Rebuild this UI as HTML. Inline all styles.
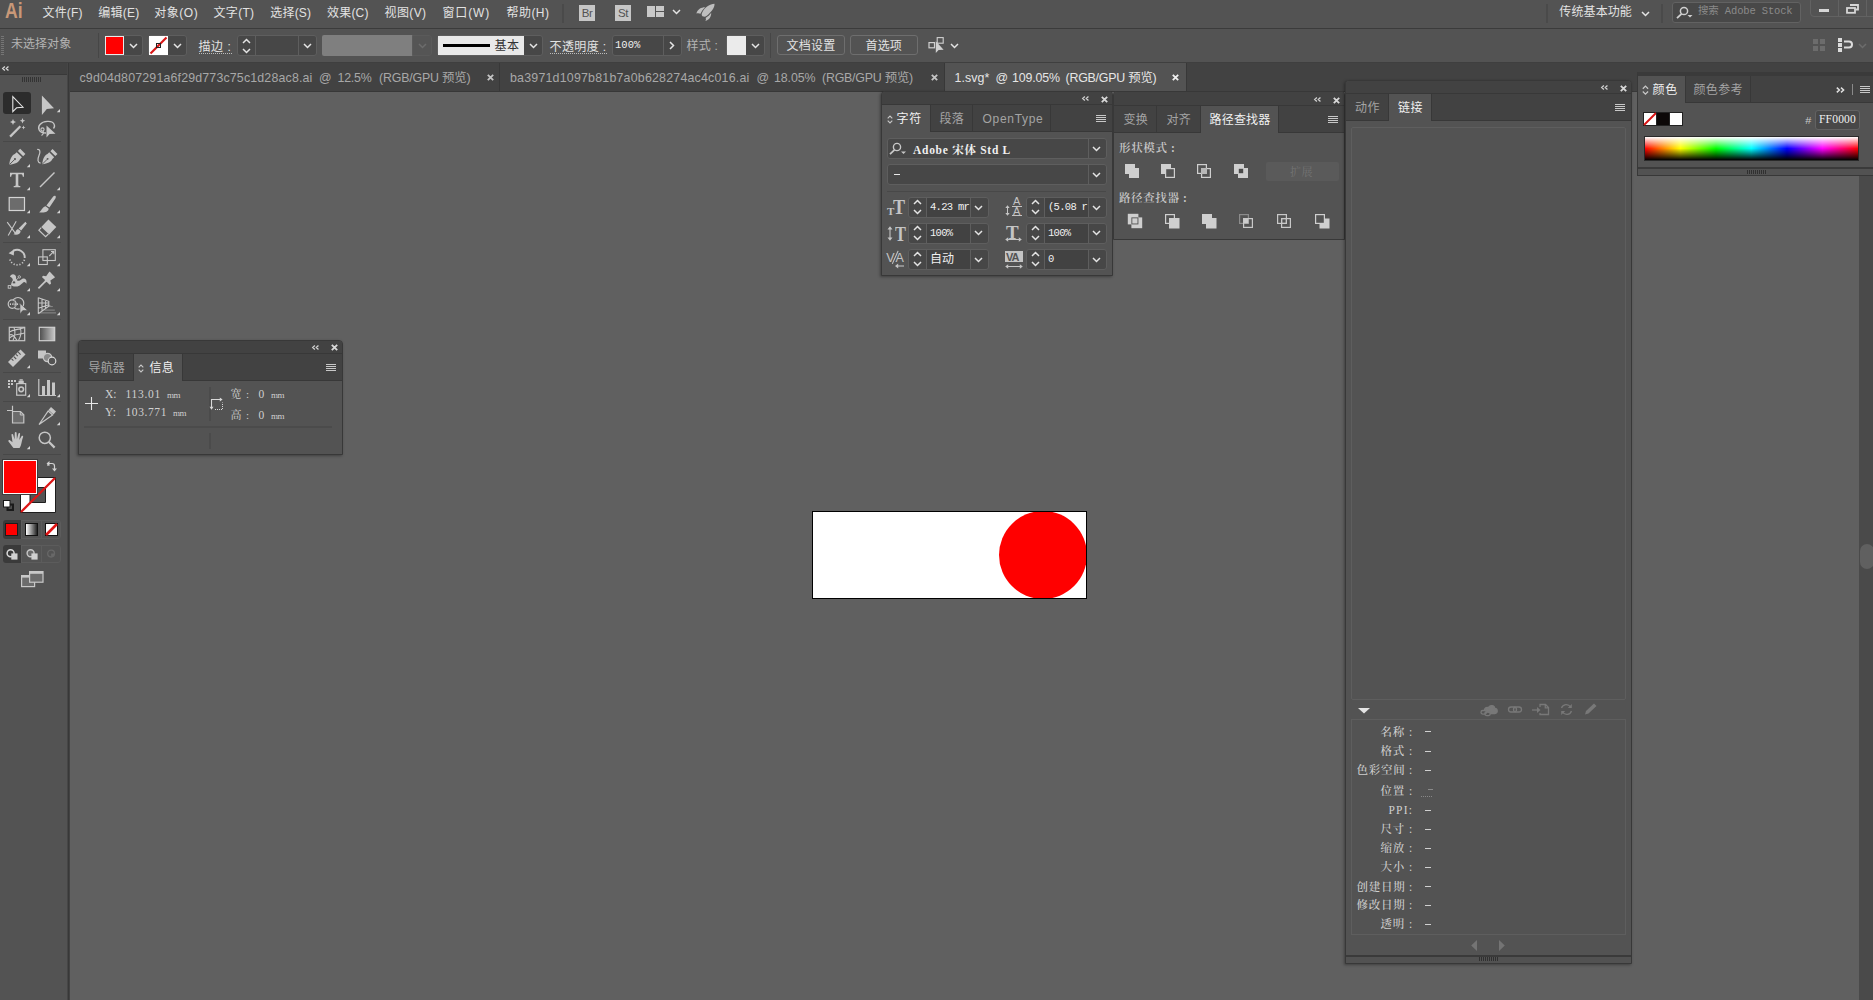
<!DOCTYPE html>
<html lang="zh-CN">
<head>
<meta charset="utf-8">
<title>Adobe Illustrator</title>
<style>
*{box-sizing:border-box;margin:0;padding:0}
html,body{width:1873px;height:1000px;overflow:hidden;background:#606060}
body{position:relative;font-family:"Liberation Sans","Noto Sans CJK SC",sans-serif;font-size:12px;color:#dcdcdc;line-height:1}
.a{position:absolute}
.t{position:absolute;white-space:pre;line-height:16px;height:16px}
svg{position:absolute;overflow:visible}
.serif{font-family:"Liberation Serif","Noto Serif CJK SC",serif}
.mono{font-family:"Liberation Mono","Noto Sans CJK SC",monospace}
.box{position:absolute;border:1px solid #5e5e5e;border-radius:3px;background:#474747}
.btn{position:absolute;border:1px solid #6e6e6e;border-radius:3px}
.dot{border-bottom:1px dotted #bbb}
.panel{position:absolute;background:#535353;border:1px solid #383838}
.v{position:absolute;width:1px;background:#5e5e5e}
</style>
</head>
<body>
<!-- canvas -->
<div class="a" style="left:70px;top:92px;width:1789px;height:908px;background:#606060;"></div>
<div class="a" style="left:812px;top:511px;width:275px;height:88px;background:#fff;border:1px solid #000;overflow:hidden"><div class="a" style="left:186px;top:-1px;width:88px;height:88px;border-radius:50%;background:#ff0000"></div></div>
<div class="a" style="left:1859px;top:176px;width:14px;height:824px;background:#4a4a4a;"></div>
<div class="a" style="left:1860px;top:544px;width:14px;height:25px;background:#606060;border-radius:7px"></div>
<!-- menubar -->
<div class="a" style="left:0;top:0;width:1873px;height:29px;background:#535353;border-bottom:1px solid #3b3b3b">
<div class="t" style="left:4.5px;top:0;font-size:22px;font-weight:bold;color:#c89878;line-height:22px;height:22px;transform:scaleX(.8);transform-origin:0 0">Ai</div>
<div class="t" style="left:42.5px;top:5.2px;color:#e2e2e2;letter-spacing:0.174px;">文件(F)</div>
<div class="t" style="left:98.25px;top:5.2px;color:#e2e2e2;letter-spacing:0.240px;">编辑(E)</div>
<div class="t" style="left:154.25px;top:5.2px;color:#e2e2e2;letter-spacing:0.524px;">对象(O)</div>
<div class="t" style="left:213.5px;top:5.2px;color:#e2e2e2;letter-spacing:0.324px;">文字(T)</div>
<div class="t" style="left:270.25px;top:5.2px;color:#e2e2e2;letter-spacing:0.190px;">选择(S)</div>
<div class="t" style="left:327.0px;top:5.2px;color:#e2e2e2;letter-spacing:0.206px;">效果(C)</div>
<div class="t" style="left:384.5px;top:5.2px;color:#e2e2e2;letter-spacing:0.390px;">视图(V)</div>
<div class="t" style="left:442.5px;top:5.2px;color:#e2e2e2;letter-spacing:0.874px;">窗口(W)</div>
<div class="t" style="left:506.5px;top:5.2px;color:#e2e2e2;letter-spacing:0.456px;">帮助(H)</div>
<div class="a" style="left:562px;top:4px;width:2px;height:19px;background:#4a4a4a;"></div>
<div class="a" style="left:579px;top:5px;width:16px;height:16px;background:#c6c6c6;color:#535353;font-size:11.5px;line-height:17px;text-align:center;letter-spacing:-.5px">Br</div>
<div class="a" style="left:615px;top:5px;width:16px;height:16px;background:#c6c6c6;color:#535353;font-size:11.5px;line-height:17px;text-align:center;letter-spacing:-.5px">St</div>
<svg style="left:647px;top:6px" width="18" height="12" viewBox="0 0 18 12"><rect x="0" y="0" width="8" height="11" fill="#c8c8c8"/><rect x="9" y="0" width="8" height="5" fill="#c8c8c8"/><rect x="9" y="6" width="8" height="5" fill="#c8c8c8"/></svg>
<svg style="left:672.0px;top:8.8px" width="9" height="6" viewBox="0 0 9 6"><path d="M1 1 L4.5 4.5 L8 1" fill="none" stroke="#e4e4e4" stroke-width="1.5"/></svg>
<svg style="left:694px;top:2px" width="22" height="20" viewBox="694 2 22 20"><path d="M714.5 3.8 C710 4 704.6 6.8 701.9 13.2 C701.3 14.8 702 16.2 703.4 16.6 C704.6 16.9 705.8 16.6 706.8 15.8 C712 11.5 714.8 7.6 714.5 3.8Z M696.4 13.6 C697.4 9.2 701.2 7.2 705.2 7.2 C703.2 8.9 701.5 11.2 700.5 13.8 C699.2 13 697.7 12.9 696.4 13.6Z M705.3 21 C709.3 19.8 711.3 16.8 711.2 12.8 C709.7 14.9 707.8 16.7 705.6 17.9 C706.2 18.9 706 20 705.3 21Z" fill="#bebebe"/></svg>
<div class="a" style="left:1546px;top:4px;width:2px;height:19px;background:#4a4a4a;"></div>
<div class="t" style="left:1559.3px;top:3.7px;color:#e2e2e2;letter-spacing:0.114px;">传统基本功能</div>
<svg style="left:1640.5px;top:10.5px" width="9" height="6" viewBox="0 0 9 6"><path d="M1 1 L4.5 4.5 L8 1" fill="none" stroke="#e4e4e4" stroke-width="1.5"/></svg>
<div class="a" style="left:1661px;top:4px;width:2px;height:19px;background:#4a4a4a;"></div>
<div class="box" style="left:1672px;top:2px;width:129px;height:21px;background:#484848;border-color:#626262"></div>
<svg style="left:1676px;top:6px" width="18" height="14" viewBox="0 0 18 14"><circle cx="8" cy="5" r="3.6" fill="none" stroke="#d0d0d0" stroke-width="1.5"/><path d="M5.5 7.8 L1 12.2" stroke="#d0d0d0" stroke-width="1.8"/><path d="M11.5 9 h5 l-2.5 2.6z" fill="#d0d0d0"/></svg>
<div class="t mono" style="left:1698px;top:3px;font-size:10.5px;color:#8a8a8a;letter-spacing:-0.152px;">搜索 Adobe Stock</div>
<div class="a" style="left:1810px;top:-3px;width:70px;height:20px;border:1px solid #626262;border-radius:4px"></div>
<div class="a" style="left:1838px;top:0px;width:1px;height:16px;background:#626262;"></div>
<div class="a" style="left:1866px;top:0px;width:1px;height:16px;background:#626262;"></div>
<div class="a" style="left:1819px;top:9px;width:10px;height:3px;background:#d6d6d6;"></div>
<svg style="left:1845.5px;top:3.5px" width="13" height="10" viewBox="0 0 13 10"><path d="M4 1 h8 v4.5 h-2.5" fill="none" stroke="#d6d6d6" stroke-width="1.8"/><rect x="1" y="4" width="8" height="4.8" fill="none" stroke="#d6d6d6" stroke-width="1.8"/></svg>
</div>
<!-- control bar -->
<div class="a" style="left:0;top:29px;width:1873px;height:34px;background:#535353;border-bottom:1px solid #3f3f3f">
<div class="a" style="left:1px;top:7px;width:3px;height:19px;background:repeating-linear-gradient(#757575 0 1px,transparent 1px 2px)"></div>
<div class="t" style="left:11px;top:7.2px;color:#b4b4b4;letter-spacing:0.037px;">未选择对象</div>
<div class="a" style="left:98px;top:4px;width:1px;height:25px;background:#464646;"></div>
<div class="box" style="left:105px;top:6px;width:38px;height:21px"></div>
<div class="a" style="left:105px;top:7px;width:19px;height:19px;background:#ff0000;border:1px solid #e8e8e8"></div>
<svg style="left:128.5px;top:14.0px" width="9" height="6" viewBox="0 0 9 6"><path d="M1 1 L4.5 4.5 L8 1" fill="none" stroke="#e4e4e4" stroke-width="1.5"/></svg>
<div class="box" style="left:148px;top:6px;width:39px;height:21px"></div>
<svg style="left:149px;top:7px" width="19" height="19" viewBox="0 0 19 19"><rect width="19" height="19" fill="#fff"/><path d="M1.5 17.5 L17.5 1.5" stroke="#d81616" stroke-width="2.1"/><rect x="7.5" y="7.5" width="4" height="4" fill="none" stroke="#222" stroke-width="1"/></svg>
<svg style="left:172.5px;top:14.0px" width="9" height="6" viewBox="0 0 9 6"><path d="M1 1 L4.5 4.5 L8 1" fill="none" stroke="#e4e4e4" stroke-width="1.5"/></svg>
<div class="t dot" style="left:198.5px;top:10px;color:#e2e2e2;letter-spacing:0.582px;height:14.5px;">描边 :</div>
<div class="box" style="left:237px;top:6px;width:80px;height:21px"></div>
<div class="v" style="left:255px;top:7px;height:19px"></div><div class="v" style="left:298px;top:7px;height:19px"></div>
<svg style="left:241.5px;top:9px" width="9" height="16" viewBox="0 0 9 16"><path d="M1 5 L4.5 1.5 L8 5 M1 11 L4.5 14.5 L8 11" fill="none" stroke="#e4e4e4" stroke-width="1.5"/></svg>
<svg style="left:302.5px;top:14.0px" width="9" height="6" viewBox="0 0 9 6"><path d="M1 1 L4.5 4.5 L8 1" fill="none" stroke="#e4e4e4" stroke-width="1.5"/></svg>
<div class="a" style="left:322px;top:6px;width:91px;height:21px;background:#7f7f7f;border-radius:2px 0 0 2px"></div>
<div class="box" style="left:412px;top:6px;width:20px;height:21px;background:#555;border-color:#5a5a5a;border-radius:0 3px 3px 0"></div>
<svg style="left:418.0px;top:14.0px" width="9" height="6" viewBox="0 0 9 6"><path d="M1 1 L4.5 4.5 L8 1" fill="none" stroke="#6c6c6c" stroke-width="1.5"/></svg>
<div class="box" style="left:437px;top:6px;width:106px;height:21px"></div>
<div class="a" style="left:438px;top:7px;width:86px;height:19px;background:#e9e9e9;"></div>
<div class="a" style="left:443px;top:15px;width:47px;height:3px;background:#000;"></div>
<div class="t" style="left:494.5px;top:9px;color:#333;letter-spacing:0.392px;">基本</div>
<svg style="left:528.5px;top:14.0px" width="9" height="6" viewBox="0 0 9 6"><path d="M1 1 L4.5 4.5 L8 1" fill="none" stroke="#e4e4e4" stroke-width="1.5"/></svg>
<div class="t dot" style="left:549.5px;top:10px;color:#e2e2e2;letter-spacing:0.388px;height:14.5px;">不透明度 :</div>
<div class="box" style="left:612px;top:6px;width:70px;height:21px"></div>
<div class="v" style="left:663px;top:7px;height:19px"></div>
<div class="t mono" style="left:615px;top:7.5px;font-size:10.5px;color:#f0f0f0;letter-spacing:0.070px;">100%</div>
<svg style="left:668.5px;top:12px" width="6" height="9" viewBox="0 0 6 9"><path d="M1 1 L4.5 4.5 L1 8" fill="none" stroke="#e4e4e4" stroke-width="1.5"/></svg>
<div class="t" style="left:686.5px;top:8.5px;color:#b4b4b4;letter-spacing:0.207px;">样式 :</div>
<div class="box" style="left:726px;top:6px;width:39px;height:21px"></div>
<div class="a" style="left:727px;top:7px;width:19px;height:19px;background:#ebebeb;"></div>
<svg style="left:750.5px;top:14.0px" width="9" height="6" viewBox="0 0 9 6"><path d="M1 1 L4.5 4.5 L8 1" fill="none" stroke="#e4e4e4" stroke-width="1.5"/></svg>
<div class="a" style="left:770px;top:4px;width:1px;height:25px;background:#464646;"></div>
<div class="btn" style="left:777px;top:6px;width:68px;height:20px"></div>
<div class="t" style="left:786.5px;top:9px;color:#e2e2e2;letter-spacing:0.246px;">文档设置</div>
<div class="btn" style="left:850px;top:6px;width:68px;height:20px"></div>
<div class="t" style="left:865.5px;top:9px;color:#e2e2e2;letter-spacing:0.161px;">首选项</div>
<svg style="left:926px;top:7px" width="20" height="18" viewBox="926 36 20 18"><rect x="929" y="42.6" width="5.5" height="5.2" fill="none" stroke="#d0d0d0" stroke-width="1.2"/><rect x="937.2" y="37.6" width="6" height="5.6" fill="none" stroke="#d0d0d0" stroke-width="1.1"/><path d="M935.8 41.2 V53 L938.6 50 L943.6 49.8Z" fill="#d0d0d0"/></svg>
<svg style="left:949.5px;top:14.0px" width="9" height="6" viewBox="0 0 9 6"><path d="M1 1 L4.5 4.5 L8 1" fill="none" stroke="#e4e4e4" stroke-width="1.5"/></svg>
<svg style="left:1812px;top:9px" width="15" height="14" viewBox="0 0 15 14"><g fill="#6c6c6c"><rect x="1" y="1" width="5" height="5"/><rect x="8" y="1" width="5" height="5"/><rect x="1" y="8" width="5" height="5"/><rect x="8" y="8" width="5" height="5"/></g></svg>
<svg style="left:1837.5px;top:8px" width="17" height="16" viewBox="0 0 17 16"><g fill="#dcdcdc"><rect x="0" y="1" width="4" height="4"/><rect x="0" y="6" width="4" height="4"/><rect x="0" y="11" width="4" height="4"/></g><path d="M6 4.5 h5 a3 3 0 0 1 0 6 h-5" fill="none" stroke="#dcdcdc" stroke-width="2"/></svg>
<svg style="left:1857.5px;top:14.0px" width="9" height="6" viewBox="0 0 9 6"><path d="M1 1 L4.5 4.5 L8 1" fill="none" stroke="#6c6c6c" stroke-width="1.5"/></svg>
</div>
<!-- document tabs -->
<div class="a" style="left:0;top:63px;width:1873px;height:29px;background:#424242;border-bottom:1px solid #383838">
<div class="a" style="left:945px;top:0px;width:241px;height:28px;background:#535353;"></div>
<div class="t" style="left:79.5px;top:6.7px;font-size:12.4px;color:#a8a8a8;letter-spacing:0.161px;">c9d04d807291a6f29d773c75c1d28ac8.ai</div>
<div class="t" style="left:319px;top:6.7px;font-size:12.4px;color:#a8a8a8;letter-spacing:-1.094px;">@</div>
<div class="t" style="left:337.5px;top:6.7px;font-size:12.4px;color:#a8a8a8;letter-spacing:-0.228px;">12.5%</div>
<div class="t" style="left:379px;top:6.7px;font-size:12.4px;color:#a8a8a8;letter-spacing:-0.177px;">(RGB/GPU 预览)</div>
<svg style="left:486.5px;top:10.5px" width="7" height="7" viewBox="0 0 7 7"><path d="M.8 .8 L6.2 6.2 M6.2 .8 L.8 6.2" stroke="#c4c4c4" stroke-width="1.8"/></svg>
<div class="a" style="left:499px;top:0px;width:1px;height:28px;background:#383838;"></div>
<div class="t" style="left:510px;top:6.7px;font-size:12.4px;color:#a8a8a8;letter-spacing:0.208px;">ba3971d1097b81b7a0b628274ac4c016.ai</div>
<div class="t" style="left:756.5px;top:6.7px;font-size:12.4px;color:#a8a8a8;letter-spacing:-1.094px;">@</div>
<div class="t" style="left:774px;top:6.7px;font-size:12.4px;color:#a8a8a8;letter-spacing:-0.089px;">18.05%</div>
<div class="t" style="left:822px;top:6.7px;font-size:12.4px;color:#a8a8a8;letter-spacing:-0.219px;">(RGB/GPU 预览)</div>
<svg style="left:930.5px;top:10.5px" width="7" height="7" viewBox="0 0 7 7"><path d="M.8 .8 L6.2 6.2 M6.2 .8 L.8 6.2" stroke="#c4c4c4" stroke-width="1.8"/></svg>
<div class="a" style="left:944px;top:0px;width:1px;height:28px;background:#383838;"></div>
<div class="t" style="left:954.5px;top:6.7px;font-size:12.4px;color:#e6e6e6;letter-spacing:0.094px;">1.svg*</div>
<div class="t" style="left:995.5px;top:6.7px;font-size:12.4px;color:#e6e6e6;letter-spacing:-1.594px;">@</div>
<div class="t" style="left:1012px;top:6.7px;font-size:12.4px;color:#e6e6e6;letter-spacing:-0.132px;">109.05%</div>
<div class="t" style="left:1065.5px;top:6.7px;font-size:12.4px;color:#e6e6e6;letter-spacing:-0.219px;">(RGB/GPU 预览)</div>
<svg style="left:1172.0px;top:10.5px" width="7" height="7" viewBox="0 0 7 7"><path d="M.8 .8 L6.2 6.2 M6.2 .8 L.8 6.2" stroke="#f0f0f0" stroke-width="1.8"/></svg>
<div class="a" style="left:1186px;top:0px;width:1px;height:28px;background:#383838;"></div>
</div>
<!-- toolbar -->
<div class="a" style="left:0;top:63px;width:70px;height:937px;background:linear-gradient(90deg,#535353 0 67px,#464646 67px 68px,#383838 68px 69px,#424242 69px 70px)">
<div class="a" style="left:0px;top:0px;width:67px;height:11px;background:#424242;"></div>
<div class="a" style="left:0px;top:11px;width:67px;height:1px;background:#393939;"></div>
<svg style="left:2.13px;top:3.45px" width="7.14" height="5.1" viewBox="0 0 8.4 6"><path d="M3.4 .6 L.8 3 L3.4 5.4 M7.6 .6 L5 3 L7.6 5.4" fill="none" stroke="#d8d8d8" stroke-width="1.5"/></svg>
<div class="a" style="left:22px;top:14px;width:19px;height:5px;background:repeating-linear-gradient(90deg,#333 0 1px,transparent 1px 2px)"></div>
<div class="a" style="left:3px;top:78.0px;width:58px;height:1px;background:#484848;"></div>
<div class="a" style="left:3px;top:179.0px;width:58px;height:1px;background:#484848;"></div>
<div class="a" style="left:3px;top:256.0px;width:58px;height:1px;background:#484848;"></div>
<div class="a" style="left:3px;top:309.0px;width:58px;height:1px;background:#484848;"></div>
<div class="a" style="left:3px;top:337.5px;width:58px;height:1px;background:#484848;"></div>
<div class="a" style="left:3px;top:391.0px;width:58px;height:1px;background:#484848;"></div>
<div class="a" style="left:3px;top:29px;width:28px;height:22px;background:#2c2c2c;border-radius:3px"></div>
<svg style="left:5px;top:27.5px" width="24" height="24" viewBox="0 0 24 24" fill="#c6c6c6" stroke="none"><path d="M7.8 5.6 V20.6 L11.6 16.8 L18 16.2Z" fill="none" stroke="#e4e4e4" stroke-width="1.1" stroke-linejoin="miter"/></svg>
<svg style="left:35px;top:27.5px" width="24" height="24" viewBox="0 0 24 24" fill="#c6c6c6" stroke="none"><path d="M6.9 4.5 V24 L11.8 18 L19 17.2Z"/><path d="M25 18 v3.2 h-3.2z" fill="#d4d4d4"/></svg>
<svg style="left:5px;top:52.5px" width="24" height="24" viewBox="0 0 24 24" fill="#c6c6c6" stroke="none"><path d="M4.3 19.8 L14.6 9.5 L16.2 11.1 L5.9 21.4Z"/><path d="M8 3 l.9 2.1 2.1.9 -2.1.9 -.9 2.1 -.9-2.1 -2.1-.9 2.1-.9z M17.5 2 l.8 1.9 1.9.8 -1.9.8 -.8 1.9 -.8-1.9 -1.9-.8 1.9-.8z M18.5 9.5 l.6 1.4 1.4.6 -1.4.6 -.6 1.4 -.6-1.4 -1.4-.6 1.4-.6z"/></svg>
<svg style="left:35px;top:52.5px" width="24" height="24" viewBox="0 0 24 24" fill="#c6c6c6" stroke="none"><path d="M11 17 C4 17 2 12 5 8.5 C8 5 17 4 19 8 C20 10 19.5 11.5 18.5 12.5" fill="none" stroke="#c6c6c6" stroke-width="1.3"/><circle cx="7.5" cy="13.5" r="1.6" fill="none" stroke="#c6c6c6" stroke-width="1.1"/><path d="M8 15 C9 17 8 18.5 6.5 19.5" fill="none" stroke="#c6c6c6" stroke-width="1.1"/><path d="M11.5 9.5 V21.5 L14.6 18 L20.5 17.8Z"/></svg>
<svg style="left:5px;top:82.5px" width="24" height="24" viewBox="0 0 24 24" fill="#c6c6c6" stroke="none"><g transform="translate(.4,1.8) scale(.87)"><path d="M13 5 L19 11 L16.8 13.2 C15.5 16.5 11 19 4.5 19.5 C5 13 7.5 8.5 10.8 7.2Z M14.4 3.6 L17 1 L23 7 L20.4 9.6Z"/><path d="M4.8 19.2 L10.5 13.5" stroke="#535353" stroke-width="1.1"/><circle cx="11" cy="13" r="1.2" fill="#535353"/></g><path d="M25 18 v3.2 h-3.2z" fill="#d4d4d4"/></svg>
<svg style="left:35px;top:82.5px" width="24" height="24" viewBox="0 0 24 24" fill="#c6c6c6" stroke="none"><g transform="translate(3.6,2.2) scale(.82)"><path d="M13 5 L19 11 L16.8 13.2 C15.5 16.5 11 19 4.5 19.5 C5 13 7.5 8.5 10.8 7.2Z M14.4 3.6 L17 1 L23 7 L20.4 9.6Z"/><path d="M4.8 19.2 L10.5 13.5" stroke="#535353" stroke-width="1.1"/><circle cx="11" cy="13" r="1.2" fill="#535353"/></g><path d="M2.2 3.5 C5.2 3 5.6 6 4 9.5 C2.2 13.5 2.6 16.8 5.6 17.2" fill="none" stroke="#c6c6c6" stroke-width="1.2"/></svg>
<svg style="left:5px;top:105.5px" width="24" height="24" viewBox="0 0 24 24" fill="#c6c6c6" stroke="none"><path transform="translate(0,-1.3)" d="M5 5 H19 V9 H17.8 C17.6 7.2 17 6.6 15.5 6.6 H13.3 V17 C13.3 18 13.8 18.3 15.3 18.4 V19.5 H8.7 V18.4 C10.2 18.3 10.7 18 10.7 17 V6.6 H8.5 C7 6.6 6.4 7.2 6.2 9 H5Z"/><path d="M25 18 v3.2 h-3.2z" fill="#d4d4d4"/></svg>
<svg style="left:35px;top:105.5px" width="24" height="24" viewBox="0 0 24 24" fill="#c6c6c6" stroke="none"><path transform="translate(0,-1)" d="M5 19 L19.5 4.5" stroke="#c6c6c6" stroke-width="1.5" fill="none"/><path d="M25 18 v3.2 h-3.2z" fill="#d4d4d4"/></svg>
<svg style="left:5px;top:129px" width="24" height="24" viewBox="0 0 24 24" fill="#c6c6c6" stroke="none"><rect x="4.2" y="5.5" width="15.3" height="13" fill="#6c6c6c" stroke="#d4d4d4" stroke-width="1.2"/><path d="M25 18 v3.2 h-3.2z" fill="#d4d4d4"/></svg>
<svg style="left:35px;top:129px" width="24" height="24" viewBox="0 0 24 24" fill="#c6c6c6" stroke="none"><path d="M20.2 3.8 C21 4.4 21 5.4 20.4 6.4 L14.4 15.6 L11.4 13.4 L18.2 4.6 C18.8 3.8 19.6 3.4 20.2 3.8Z M10.6 14.2 L13.6 16.4 C13.8 19.4 10 21 4 20.2 C6.6 19.2 6.6 15.4 10.6 14.2Z"/><path d="M25 18 v3.2 h-3.2z" fill="#d4d4d4"/></svg>
<svg style="left:5px;top:153.5px" width="24" height="24" viewBox="0 0 24 24" fill="#c6c6c6" stroke="none"><path d="M2.2 5.2 L10.8 16.8 M11.2 4.2 L3.2 18.4" stroke="#c6c6c6" stroke-width="1.1" fill="none"/><path d="M20.4 4.8 L21.8 6.4 L16.2 13.4 L13.6 11.4Z M13 12 L15.6 14 C15.8 17 12 18.4 8.4 17.2 C10.6 16.4 10.4 13 13 12Z"/><path d="M25 18 v3.2 h-3.2z" fill="#d4d4d4"/></svg>
<svg style="left:35px;top:153.5px" width="24" height="24" viewBox="0 0 24 24" fill="#c6c6c6" stroke="none"><path d="M13.4 2.6 L21.3 10 L14.2 17.4 L6.3 10Z"/><path d="M6.3 10.6 L3.9 13.2 L10.6 19.6 L13.4 17" fill="none" stroke="#c6c6c6" stroke-width="1.2"/><path d="M25 18 v3.2 h-3.2z" fill="#d4d4d4"/></svg>
<svg style="left:5px;top:182px" width="24" height="24" viewBox="0 0 24 24" fill="#c6c6c6" stroke="none"><path d="M8.2 5.9 A7.6 7.6 0 0 1 19.7 13" fill="none" stroke="#c6c6c6" stroke-width="1.9"/><path d="M3.6 8.3 L9.2 4.2 L8.8 10.6Z"/><path d="M19.4 14.8 A7.6 7.6 0 0 1 4.9 14.4" fill="none" stroke="#c6c6c6" stroke-width="1.7" stroke-dasharray="1.2 1.75"/><path d="M25 18 v3.2 h-3.2z" fill="#d4d4d4"/></svg>
<svg style="left:35px;top:182px" width="24" height="24" viewBox="0 0 24 24" fill="#c6c6c6" stroke="none"><rect x="7.9" y="4.7" width="12.4" height="10.8" fill="none" stroke="#c6c6c6" stroke-width="1.1"/><rect x="3.5" y="11.9" width="8.8" height="7.6" fill="none" stroke="#c6c6c6" stroke-width="1.1"/><path d="M14.3 11 L18.6 6.7 M16 6.5 H18.8 V9.3" fill="none" stroke="#c6c6c6" stroke-width="1.1"/><path d="M25 18 v3.2 h-3.2z" fill="#d4d4d4"/></svg>
<svg style="left:5px;top:206.5px" width="24" height="24" viewBox="0 0 24 24" fill="#c6c6c6" stroke="none"><path d="M5 6.8 C5.5 4.6 8 3.6 10 5 C11.6 6.2 10.8 8.4 11.4 9.6 C12.2 11.2 14.6 11.2 16 9.8 C17.4 8.4 19.6 7.8 20.8 9.4 C21.8 10.8 21.6 12.6 21.3 13.8 C20.6 12.4 19.6 11.6 18.6 12.2 C16.6 13.4 15.2 16.4 11 16.6 C8.4 16.7 6.2 15.8 6.2 14.2 C6.2 12.6 8 11.6 7.8 9.8 C7.7 8.4 6.6 7.2 5 6.8Z"/><path d="M4.6 16.8 L14 7.2" stroke="#c6c6c6" stroke-width=".9"/><circle cx="9" cy="12.4" r="1.7" fill="#535353" stroke="#c6c6c6" stroke-width="1"/><circle cx="14.3" cy="6.9" r="1.2" fill="#535353" stroke="#c6c6c6" stroke-width=".9"/><rect x="3.2" y="15.6" width="2.6" height="2.6" fill="#535353" stroke="#c6c6c6" stroke-width=".9"/><path d="M25 18 v3.2 h-3.2z" fill="#d4d4d4"/></svg>
<svg style="left:35px;top:206.5px" width="24" height="24" viewBox="0 0 24 24" fill="#c6c6c6" stroke="none"><g transform="translate(10.4,11.3) rotate(45)"><path d="M-3.2 -9.8 H3.2 C3.8 -9.8 4 -9.4 3.9 -8.9 L3 -4 L5.6 -2.4 V-.6 H1.1 L.8 .8 H-.8 L-1.1 -.6 H-5.6 V-2.4 L-3 -4 L-3.9 -8.9 C-4 -9.4 -3.8 -9.8 -3.2 -9.8Z"/><path d="M0 .4 V9.9" stroke="#c6c6c6" stroke-width="1.7"/></g><path d="M25 18 v3.2 h-3.2z" fill="#d4d4d4"/></svg>
<svg style="left:5px;top:230.5px" width="24" height="24" viewBox="0 0 24 24" fill="#c6c6c6" stroke="none"><circle cx="13" cy="9.3" r="5.8" fill="none" stroke="#c6c6c6" stroke-width="1.2"/><ellipse cx="7.2" cy="10.1" rx="4" ry="4.3" fill="#535353" stroke="#c6c6c6" stroke-width="1.2"/><path d="M10.4 5.6 A5.8 5.8 0 0 0 10.4 13" fill="none" stroke="#8a8a8a" stroke-width="1"/><path d="M4.9 10.1 H14.6" stroke="#f2f2f2" stroke-width="1.3" stroke-dasharray="1.1 1.25"/><path d="M15 9.3 V19.8 L17.8 16.6 L22.6 16.4Z" stroke="#535353" stroke-width=".6"/><path d="M25 18 v3.2 h-3.2z" fill="#d4d4d4"/></svg>
<svg style="left:35px;top:230.5px" width="24" height="24" viewBox="0 0 24 24" fill="#c6c6c6" stroke="none"><path d="M17.8 12.6 H13.8 M19.8 16.1 H9.4 M21 18.9 H4.6" stroke="#8c8c8c" stroke-width="1" fill="none"/><path d="M13.2 10.6 L17 12.2 H13.2Z" fill="#8c8c8c"/><path d="M3.3 3.6 V19.8 M3.3 3.7 L13.8 7.3 V12.1 L3.3 19.7 M7 5 V17 M10.6 6.2 V14.4 M3.3 8.9 L13.8 9 M3.3 14.3 L13.8 10.7" fill="none" stroke="#c6c6c6" stroke-width="1.1"/><path d="M25 18 v3.2 h-3.2z" fill="#d4d4d4"/></svg>
<svg style="left:5px;top:259px" width="24" height="24" viewBox="0 0 24 24" fill="#c6c6c6" stroke="none"><rect x="4.3" y="5.3" width="15.4" height="13.4" fill="none" stroke="#c6c6c6" stroke-width="1.2"/><path d="M4.5 10 C9 7 12 8 19.5 5.8 M4.5 16 C9 12 13 13 19.5 11 M9 5.5 C11 10 10 14 8 18.5 M15 5.5 C17 10 16 14 13.5 18.5 M4.5 13 C8 11 11 17 12 18.5" fill="none" stroke="#c6c6c6" stroke-width="1.1"/></svg>
<svg style="left:35px;top:259px" width="24" height="24" viewBox="0 0 24 24"><defs><linearGradient id="gd1" x1="0" y1="0" x2="1" y2="0"><stop offset="0" stop-color="#4c4c4c"/><stop offset="1" stop-color="#c8c8c8"/></linearGradient></defs><rect x="4.3" y="5.3" width="15.4" height="13.4" fill="url(#gd1)" stroke="#d0d0d0" stroke-width="1.2"/></svg>
<svg style="left:5px;top:283.5px" width="24" height="24" viewBox="0 0 24 24" fill="#c6c6c6" stroke="none"><path d="M15.5 2.5 L20.5 7.5 L8 20 L3 15Z"/><path d="M13.2 5.2 l2.4 2.4 M11 7.4 l1.8 1.8 M8.8 9.6 l2.4 2.4 M6.6 11.8 l1.8 1.8" stroke="#535353" stroke-width="1.1"/><path d="M25 18 v3.2 h-3.2z" fill="#d4d4d4"/></svg>
<svg style="left:35px;top:283.5px" width="24" height="24" viewBox="0 0 24 24" fill="#c6c6c6" stroke="none"><rect x="3" y="3.5" width="8" height="8"/><circle cx="12.5" cy="10.5" r="4.2" fill="#8a8a8a" stroke="#c6c6c6" stroke-width="1.2"/><circle cx="17" cy="14" r="3.8" fill="#535353" stroke="#d8d8d8" stroke-width="1.2"/></svg>
<svg style="left:5px;top:312.5px" width="24" height="24" viewBox="0 0 24 24" fill="#c6c6c6" stroke="none"><g><rect x="3" y="4" width="2" height="2"/><rect x="6" y="4" width="2" height="2"/><rect x="9" y="4" width="2" height="2"/><rect x="3" y="7" width="2" height="2"/><rect x="6" y="7" width="2" height="2"/><rect x="3" y="10" width="2" height="2"/></g><rect x="11.7" y="7.6" width="9" height="11.6" fill="none" stroke="#c6c6c6" stroke-width="1.2"/><path d="M13.5 7 V4.8 H18.8 V7Z M14.5 4.5 V3.2 H17.8 V4.5Z"/><circle cx="16.2" cy="13.3" r="2.3" fill="none" stroke="#c6c6c6" stroke-width="1.6"/><path d="M25 18 v3.2 h-3.2z" fill="#d4d4d4"/></svg>
<svg style="left:35px;top:312.5px" width="24" height="24" viewBox="0 0 24 24" fill="#c6c6c6" stroke="none"><path d="M3.8 3 V19.5 H21" fill="none" stroke="#c6c6c6" stroke-width="1.2"/><rect x="7" y="10" width="3" height="9"/><rect x="12" y="4" width="3" height="15"/><rect x="17" y="6.5" width="3" height="12.5"/><path d="M25 18 v3.2 h-3.2z" fill="#d4d4d4"/></svg>
<svg style="left:5px;top:340.5px" width="24" height="24" viewBox="0 0 24 24" fill="#c6c6c6" stroke="none"><path d="M7.5 1.8 V7 M2 6.5 H7" stroke="#c6c6c6" stroke-width="1.2"/><path d="M7.5 7.5 H15.5 L18.8 10.8 V19 H7.5Z" fill="#6c6c6c" stroke="#c6c6c6" stroke-width="1.2"/><path d="M15.3 7.8 V11 H18.5" fill="none" stroke="#c6c6c6" stroke-width="1"/></svg>
<svg style="left:35px;top:340.5px" width="24" height="24" viewBox="0 0 24 24" fill="#c6c6c6" stroke="none"><path d="M16 3 L21 7.5 L18.5 10.5 L13.5 6Z"/><path d="M13.2 7 L17.6 11 L4 20.5Z" fill="none" stroke="#c6c6c6" stroke-width="1.2"/><path d="M25 18 v3.2 h-3.2z" fill="#d4d4d4"/></svg>
<svg style="left:5px;top:365px" width="24" height="24" viewBox="0 0 24 24" fill="#c6c6c6" stroke="none"><path d="M8.5 20 C6.5 17.5 5 15.5 3.5 13.5 C2.8 12.4 4 11.4 5 12.2 L7.5 14.3 L6.5 7 C6.3 5.8 7.9 5.5 8.2 6.7 L9.5 11.5 L9.8 4.8 C9.9 3.6 11.5 3.6 11.6 4.8 L11.9 11.3 L13.4 5.6 C13.7 4.5 15.3 4.8 15.1 6 L14.3 11.9 L16.5 8.3 C17.1 7.3 18.5 8 18.1 9.1 C17 12 16.8 14.5 16 17 C15.5 18.5 15 19.3 14.5 20Z"/><path d="M25 18 v3.2 h-3.2z" fill="#d4d4d4"/></svg>
<svg style="left:35px;top:365px" width="24" height="24" viewBox="0 0 24 24" fill="#c6c6c6" stroke="none"><circle cx="9.8" cy="9.8" r="5.6" fill="none" stroke="#c6c6c6" stroke-width="1.5"/><path d="M13.8 13.8 L19.6 19.6" stroke="#c6c6c6" stroke-width="2.2"/></svg>
<svg style="left:0;top:397px" width="64" height="58" viewBox="0 460 64 58"><path d="M20.5 477.5 H55.5 V512.5 H20.5Z M30 487.5 V502.5 H45.5 V487.5Z" fill="#fff" fill-rule="evenodd" stroke="#1e1e1e" stroke-width="1"/><path d="M21 512 L55 478" stroke="#dc1616" stroke-width="2.3"/><rect x="2" y="459" width="36" height="36" fill="#3c3c3c"/><rect x="3" y="460" width="34" height="34" fill="#f8f8f8"/><rect x="4" y="461" width="32" height="32" fill="#ff0000"/><path d="M48 466 V463.5 H52 C54 463.5 54.5 464.5 54.5 466 V469.5" fill="none" stroke="#d0d0d0" stroke-width="1.2"/><path d="M46.5 463.5 L49.5 461 V466Z M54.5 471.5 L52 468.5 H57Z" fill="#d0d0d0"/><rect x="7" y="504" width="6.5" height="6.5" fill="#1a1a1a" stroke="#1a1a1a"/><rect x="8.6" y="505.6" width="3.3" height="3.3" fill="#535353"/><rect x="3.5" y="500.5" width="6.5" height="6.5" fill="#fff" stroke="#1a1a1a" stroke-width="1"/></svg>
<div class="a" style="left:3px;top:457px;width:58px;height:19px;border:1px solid #5c5c5c;border-radius:3px"></div>
<div class="a" style="left:3px;top:457px;width:18px;height:19px;background:#3a3a3a;border-radius:3px 0 0 3px"></div>
<div class="a" style="left:21px;top:458px;width:1px;height:17px;background:#5c5c5c;"></div>
<div class="a" style="left:41px;top:458px;width:1px;height:17px;background:#5c5c5c;"></div>
<div class="a" style="left:5px;top:460px;width:13px;height:13px;background:#ff0000;border:1px solid #1c1c1c"></div>
<div class="a" style="left:25px;top:460px;width:13px;height:13px;background:linear-gradient(90deg,#fff,#222);border:1px solid #111"></div>
<svg style="left:45px;top:460px" width="13" height="13" viewBox="0 0 13 13"><rect x=".5" y=".5" width="12" height="12" fill="#fff" stroke="#111"/><path d="M1 12 L12 1" stroke="#e01414" stroke-width="2.6"/></svg>
<div class="a" style="left:3px;top:481.5px;width:58px;height:18px;border:1px solid #5c5c5c;border-radius:3px"></div>
<div class="a" style="left:3px;top:481.5px;width:18px;height:18px;background:#3a3a3a;border-radius:3px 0 0 3px"></div>
<div class="a" style="left:21px;top:482.5px;width:1px;height:16px;background:#5c5c5c;"></div>
<div class="a" style="left:41px;top:482.5px;width:1px;height:16px;background:#5c5c5c;"></div>
<svg style="left:0;top:481.5px" width="64" height="18" viewBox="0 0 64 18"><circle cx="10.6" cy="8.2" r="3.5" fill="none" stroke="#d8d8d8" stroke-width="1.5"/><rect x="11.3" y="8.4" width="6.2" height="6.2" fill="#d0d0d0"/><circle cx="30.6" cy="8.2" r="3.5" fill="#6a6a6a" stroke="#c8c8c8" stroke-width="1.4"/><rect x="31.4" y="8.4" width="6.2" height="6.2" fill="#d0d0d0"/><circle cx="51.1" cy="8.6" r="3.4" fill="none" stroke="#686868" stroke-width="1.3"/><path d="M51.1 8.6 h3.4 a3.4 3.4 0 0 1 -3.4 3.4z" fill="#686868"/></svg>
<svg style="left:21px;top:508px" width="23" height="17" viewBox="0 0 23 17"><rect x=".6" y="4.6" width="13" height="11" fill="#6c6c6c" stroke="#c8c8c8" stroke-width="1.2"/><rect x=".6" y="4.6" width="13" height="2" fill="#c8c8c8"/><rect x="8.6" y=".6" width="13.4" height="10.6" fill="#6c6c6c" stroke="#c8c8c8" stroke-width="1.2"/><rect x="8.6" y=".6" width="13.4" height="2.2" fill="#c8c8c8"/></svg>
</div>
<!-- info panel -->
<div class="a" style="left:78px;top:340px;width:265px;height:115px;background:#535353;border:1px solid #383838;border-radius:4px 4px 0 0;box-shadow:-1px 1px 3px rgba(0,0,0,.35);overflow:hidden"><div class="a" style="left:0px;top:0px;width:264px;height:12px;background:#424242;"></div><div class="a" style="left:0px;top:12px;width:264px;height:1px;background:#383838;"></div><svg style="left:233.13px;top:3.85px" width="7.14" height="5.1" viewBox="0 0 8.4 6"><path d="M3.4 .6 L.8 3 L3.4 5.4 M7.6 .6 L5 3 L7.6 5.4" fill="none" stroke="#d0d0d0" stroke-width="1.5"/></svg><svg style="left:251.5px;top:3.1999999999999886px" width="7" height="7" viewBox="0 0 7 7"><path d="M.8 .8 L6.2 6.2 M6.2 .8 L.8 6.2" stroke="#d8d8d8" stroke-width="1.8"/></svg><div class="a" style="left:0px;top:13px;width:264px;height:26px;background:#424242;"></div><div class="a" style="left:54px;top:13px;width:1px;height:26px;background:#383838;"></div><div class="t" style="left:9.5px;top:19.4px;color:#a4a4a4;letter-spacing:0.161px;">导航器</div><div class="a" style="left:55px;top:13px;width:48px;height:27px;background:#535353;"></div><div class="a" style="left:103px;top:13px;width:1px;height:26px;background:#383838;"></div><div class="t" style="left:70.5px;top:19.4px;color:#f0f0f0;letter-spacing:0.242px;">信息</div><div class="a" style="left:0px;top:39px;width:264px;height:1px;background:#383838;"></div><div class="a" style="left:55px;top:39px;width:48px;height:1px;background:#535353;"></div><svg style="left:59.400000000000006px;top:23.0px" width="6" height="9" viewBox="0 0 6 9"><path d="M.7 3.3 L3 1 L5.3 3.3 M.7 5.7 L3 8 L5.3 5.7" fill="none" stroke="#c8c8c8" stroke-width="1.1"/></svg><div class="a" style="left:247px;top:23px;width:10px;height:7px;background:repeating-linear-gradient(#c8c8c8 0 1px,transparent 1px 2px)"></div><svg style="left:6px;top:56px" width="13" height="13" viewBox="0 0 13 13"><path d="M6.5 0 V13 M0 6.5 H13" stroke="#e8e8e8" stroke-width="1.1"/></svg><div class="t serif" style="left:26px;top:45.2px;font-size:11.5px;color:#d0d0d0;letter-spacing:0.000px;">X:</div><div class="t serif" style="left:46.5px;top:45.2px;font-size:11.5px;color:#d0d0d0;letter-spacing:0.716px;">113.01</div><div class="t serif" style="left:88px;top:46.2px;font-size:9px;color:#d0d0d0;letter-spacing:-0.508px;">mm</div><div class="t serif" style="left:26px;top:63.2px;font-size:11.5px;color:#d0d0d0;letter-spacing:0.523px;">Y:</div><div class="t serif" style="left:46.5px;top:63.2px;font-size:11.5px;color:#d0d0d0;letter-spacing:0.589px;">103.771</div><div class="t serif" style="left:94px;top:64.2px;font-size:9px;color:#d0d0d0;letter-spacing:-0.508px;">mm</div><div class="a" style="left:130px;top:46px;width:2px;height:34px;background:#4b4b4b;"></div><div class="a" style="left:130px;top:92px;width:2px;height:16px;background:#4b4b4b;"></div><svg style="left:130px;top:55px" width="15" height="15" viewBox="0 0 15 15"><path d="M2.5 12 V3.5 H12" fill="none" stroke="#d8d8d8" stroke-width="1.1"/><path d="M10.8 1.5 L13.6 3.5 L10.8 5.5Z M.5 10.8 L2.5 13.8 L4.5 10.8Z" fill="#d8d8d8"/><path d="M6 13.5 H13.5 V6.5" fill="none" stroke="#d8d8d8" stroke-width="1" stroke-dasharray="1 1"/></svg><div class="t serif" style="left:151.5px;top:45.2px;font-size:11px;color:#d0d0d0;letter-spacing:0.896px;">宽 :</div><div class="t serif" style="left:179.5px;top:45.2px;font-size:11.5px;color:#d0d0d0;letter-spacing:0.750px;">0</div><div class="t serif" style="left:192px;top:46.2px;font-size:9px;color:#d0d0d0;letter-spacing:-0.508px;">mm</div><div class="t serif" style="left:151.5px;top:66.2px;font-size:11px;color:#d0d0d0;letter-spacing:0.896px;">高 :</div><div class="t serif" style="left:179.5px;top:66.2px;font-size:11.5px;color:#d0d0d0;letter-spacing:0.750px;">0</div><div class="t serif" style="left:192px;top:67.2px;font-size:9px;color:#d0d0d0;letter-spacing:-0.508px;">mm</div><div class="a" style="left:5px;top:85px;width:248px;height:2px;background:#4b4b4b;"></div></div>
<!-- character panel -->
<div class="a" style="left:881px;top:91px;width:232px;height:185px;background:#535353;border:1px solid #383838;border-radius:4px 4px 0 0;box-shadow:-1px 1px 3px rgba(0,0,0,.35);overflow:hidden"><div class="a" style="left:0px;top:0px;width:231px;height:12px;background:#424242;"></div><div class="a" style="left:0px;top:12px;width:231px;height:1px;background:#383838;"></div><svg style="left:200.13px;top:4.15px" width="7.14" height="5.1" viewBox="0 0 8.4 6"><path d="M3.4 .6 L.8 3 L3.4 5.4 M7.6 .6 L5 3 L7.6 5.4" fill="none" stroke="#d0d0d0" stroke-width="1.5"/></svg><svg style="left:218.5px;top:3.5px" width="7" height="7" viewBox="0 0 7 7"><path d="M.8 .8 L6.2 6.2 M6.2 .8 L.8 6.2" stroke="#d8d8d8" stroke-width="1.8"/></svg><div class="a" style="left:0px;top:13px;width:231px;height:26px;background:#424242;"></div><div class="a" style="left:0px;top:13px;width:48px;height:27px;background:#535353;"></div><div class="a" style="left:48px;top:13px;width:1px;height:26px;background:#383838;"></div><div class="t" style="left:14.5px;top:19.4px;color:#f0f0f0;letter-spacing:0.742px;">字符</div><div class="a" style="left:90px;top:13px;width:1px;height:26px;background:#383838;"></div><div class="t" style="left:57.5px;top:19.4px;color:#a4a4a4;letter-spacing:0.242px;">段落</div><div class="a" style="left:168px;top:13px;width:1px;height:26px;background:#383838;"></div><div class="t" style="left:100.5px;top:19.4px;color:#a4a4a4;letter-spacing:0.703px;">OpenType</div><div class="a" style="left:0px;top:39px;width:231px;height:1px;background:#383838;"></div><div class="a" style="left:0px;top:39px;width:48px;height:1px;background:#535353;"></div><svg style="left:4.5px;top:22.5px" width="6" height="9" viewBox="0 0 6 9"><path d="M.7 3.3 L3 1 L5.3 3.3 M.7 5.7 L3 8 L5.3 5.7" fill="none" stroke="#c8c8c8" stroke-width="1.1"/></svg><div class="a" style="left:214px;top:23px;width:10px;height:7px;background:repeating-linear-gradient(#c8c8c8 0 1px,transparent 1px 2px)"></div><div class="box" style="left:5px;top:46px;width:220px;height:21px"></div><div class="v" style="left:206px;top:47px;height:19px"></div><svg style="left:7px;top:50px" width="18" height="14" viewBox="0 0 18 14"><circle cx="8" cy="5" r="3.6" fill="none" stroke="#c8c8c8" stroke-width="1.4"/><path d="M5.5 7.8 L1 12.2" stroke="#c8c8c8" stroke-width="1.7"/><path d="M12 9.5 h5 l-2.5 2.6z" fill="#c8c8c8"/></svg><div class="t serif" style="left:31px;top:49.5px;font-size:11.5px;font-weight:bold;color:#f0f0f0;letter-spacing:0.723px;">Adobe 宋体 Std L</div><svg style="left:209.9000000000001px;top:53.80000000000001px" width="9" height="6" viewBox="0 0 9 6"><path d="M1 1 L4.5 4.5 L8 1" fill="none" stroke="#e4e4e4" stroke-width="1.5"/></svg><div class="box" style="left:5px;top:72px;width:220px;height:21px"></div><div class="v" style="left:206px;top:73px;height:19px"></div><div class="a" style="left:12px;top:82px;width:6px;height:1px;background:#e8e8e8;"></div><svg style="left:209.9000000000001px;top:79.80000000000001px" width="9" height="6" viewBox="0 0 9 6"><path d="M1 1 L4.5 4.5 L8 1" fill="none" stroke="#e4e4e4" stroke-width="1.5"/></svg><div class="a" style="left:5px;top:98.5px;width:219px;height:1px;background:#484848;"></div><div class="box" style="left:26px;top:105px;width:81px;height:21px"></div><div class="v" style="left:44px;top:106px;height:19px"></div><div class="v" style="left:88px;top:106px;height:19px"></div><div class="a" style="left:45px;top:106px;width:43px;height:19px;background:#424242;"></div><svg style="left:30.5px;top:107px" width="9" height="16" viewBox="0 0 9 16"><path d="M1 5 L4.5 1.5 L8 5 M1 11 L4.5 14.5 L8 11" fill="none" stroke="#e4e4e4" stroke-width="1.5"/></svg><svg style="left:91.89999999999998px;top:112.5px" width="9" height="6" viewBox="0 0 9 6"><path d="M1 1 L4.5 4.5 L8 1" fill="none" stroke="#e4e4e4" stroke-width="1.5"/></svg><div class="a" style="left:48px;top:106px;width:39.5px;height:19px;overflow:hidden"><div class="t mono" style="left:0px;top:1px;font-size:10.5px;color:#f0f0f0;letter-spacing:-0.701px;">4.23 mr</div></div><div class="box" style="left:144px;top:105px;width:81px;height:21px"></div><div class="v" style="left:162px;top:106px;height:19px"></div><div class="v" style="left:206px;top:106px;height:19px"></div><div class="a" style="left:163px;top:106px;width:43px;height:19px;background:#424242;"></div><svg style="left:148.5px;top:107px" width="9" height="16" viewBox="0 0 9 16"><path d="M1 5 L4.5 1.5 L8 5 M1 11 L4.5 14.5 L8 11" fill="none" stroke="#e4e4e4" stroke-width="1.5"/></svg><svg style="left:209.9000000000001px;top:112.5px" width="9" height="6" viewBox="0 0 9 6"><path d="M1 1 L4.5 4.5 L8 1" fill="none" stroke="#e4e4e4" stroke-width="1.5"/></svg><div class="a" style="left:166px;top:106px;width:39.5px;height:19px;overflow:hidden"><div class="t mono" style="left:0px;top:1px;font-size:10.5px;color:#f0f0f0;letter-spacing:-0.701px;">(5.08 r</div></div><div class="box" style="left:26px;top:131px;width:81px;height:21px"></div><div class="v" style="left:44px;top:132px;height:19px"></div><div class="v" style="left:88px;top:132px;height:19px"></div><div class="a" style="left:45px;top:132px;width:43px;height:19px;background:#424242;"></div><svg style="left:30.5px;top:132.5px" width="9" height="16" viewBox="0 0 9 16"><path d="M1 5 L4.5 1.5 L8 5 M1 11 L4.5 14.5 L8 11" fill="none" stroke="#e4e4e4" stroke-width="1.5"/></svg><svg style="left:91.89999999999998px;top:138.0px" width="9" height="6" viewBox="0 0 9 6"><path d="M1 1 L4.5 4.5 L8 1" fill="none" stroke="#e4e4e4" stroke-width="1.5"/></svg><div class="a" style="left:48px;top:132px;width:39.5px;height:19px;overflow:hidden"><div class="t mono" style="left:0px;top:0.5px;font-size:10.5px;color:#f0f0f0;letter-spacing:-0.705px;">100%</div></div><div class="box" style="left:144px;top:131px;width:81px;height:21px"></div><div class="v" style="left:162px;top:132px;height:19px"></div><div class="v" style="left:206px;top:132px;height:19px"></div><div class="a" style="left:163px;top:132px;width:43px;height:19px;background:#424242;"></div><svg style="left:148.5px;top:132.5px" width="9" height="16" viewBox="0 0 9 16"><path d="M1 5 L4.5 1.5 L8 5 M1 11 L4.5 14.5 L8 11" fill="none" stroke="#e4e4e4" stroke-width="1.5"/></svg><svg style="left:209.9000000000001px;top:138.0px" width="9" height="6" viewBox="0 0 9 6"><path d="M1 1 L4.5 4.5 L8 1" fill="none" stroke="#e4e4e4" stroke-width="1.5"/></svg><div class="a" style="left:166px;top:132px;width:39.5px;height:19px;overflow:hidden"><div class="t mono" style="left:0px;top:0.5px;font-size:10.5px;color:#f0f0f0;letter-spacing:-0.705px;">100%</div></div><div class="box" style="left:26px;top:157px;width:81px;height:21px"></div><div class="v" style="left:44px;top:158px;height:19px"></div><div class="v" style="left:88px;top:158px;height:19px"></div><div class="a" style="left:45px;top:158px;width:43px;height:19px;background:#424242;"></div><svg style="left:30.5px;top:159px" width="9" height="16" viewBox="0 0 9 16"><path d="M1 5 L4.5 1.5 L8 5 M1 11 L4.5 14.5 L8 11" fill="none" stroke="#e4e4e4" stroke-width="1.5"/></svg><svg style="left:91.89999999999998px;top:164.5px" width="9" height="6" viewBox="0 0 9 6"><path d="M1 1 L4.5 4.5 L8 1" fill="none" stroke="#e4e4e4" stroke-width="1.5"/></svg><div class="t" style="left:48px;top:159px;color:#f0f0f0;letter-spacing:-0.008px;">自动</div><div class="box" style="left:144px;top:157px;width:81px;height:21px"></div><div class="v" style="left:162px;top:158px;height:19px"></div><div class="v" style="left:206px;top:158px;height:19px"></div><div class="a" style="left:163px;top:158px;width:43px;height:19px;background:#424242;"></div><svg style="left:148.5px;top:159px" width="9" height="16" viewBox="0 0 9 16"><path d="M1 5 L4.5 1.5 L8 5 M1 11 L4.5 14.5 L8 11" fill="none" stroke="#e4e4e4" stroke-width="1.5"/></svg><svg style="left:209.9000000000001px;top:164.5px" width="9" height="6" viewBox="0 0 9 6"><path d="M1 1 L4.5 4.5 L8 1" fill="none" stroke="#e4e4e4" stroke-width="1.5"/></svg><div class="a" style="left:166px;top:158px;width:39.5px;height:19px;overflow:hidden"><div class="t mono" style="left:0px;top:1px;font-size:10.5px;color:#f0f0f0;letter-spacing:-0.713px;">0</div></div><div class="t serif" style="left:5px;top:113.5px;font-size:11px;font-weight:bold;color:#c4c4c4;line-height:11px;height:11px;">T</div><div class="t serif" style="left:11px;top:104.5px;font-size:21px;font-weight:bold;color:#c4c4c4;line-height:21px;height:21px;transform:scaleX(.86);transform-origin:0 0;">T</div><div class="t serif" style="left:12.5px;top:131.5px;font-size:21px;font-weight:bold;color:#c4c4c4;line-height:21px;height:21px;transform:scaleX(.78);transform-origin:0 0;">T</div><svg style="left:4.5px;top:134px" width="6" height="15" viewBox="0 0 6 15"><path d="M3 2 V13" stroke="#c4c4c4" stroke-width="1.1"/><path d="M.5 3.5 L3 .3 L5.5 3.5Z M.5 11.5 L3 14.7 L5.5 11.5Z" fill="#c4c4c4"/></svg><div class="t" style="left:4.2999999999999545px;top:158.2px;font-size:12.5px;color:#c4c4c4;">V</div><div class="t" style="left:13.600000000000023px;top:158.2px;font-size:12.5px;color:#c4c4c4;">A</div><svg style="left:9px;top:158px" width="9" height="15" viewBox="891 250 9 15"><path d="M892.3 263.9 L898.1 250.9" stroke="#c4c4c4" stroke-width="1.1"/></svg><svg style="left:13px;top:171px" width="9" height="6" viewBox="0 0 9 6"><path d="M9 3 H2" stroke="#c4c4c4" stroke-width="1.1"/><path d="M3.2 .5 L0 3 L3.2 5.5Z" fill="#c4c4c4"/></svg><div class="t" style="left:129.5px;top:104px;width:10.5px;text-align:center;font-size:11px;color:#c4c4c4;line-height:10px;height:10.5px;border-bottom:1px solid #c4c4c4">A</div><div class="t" style="left:129.5px;top:113.5px;width:10.5px;text-align:center;font-size:11px;color:#c4c4c4;line-height:10px;height:10.5px;border-bottom:1px solid #c4c4c4">A</div><svg style="left:123px;top:113px" width="5" height="11" viewBox="0 0 5 11"><path d="M2.5 2 V9" stroke="#c4c4c4" stroke-width="1"/><path d="M.3 3 L2.5 .3 L4.7 3Z M.3 8 L2.5 10.7 L4.7 8Z" fill="#c4c4c4"/></svg><div class="t serif" style="left:124px;top:130.5px;font-size:19px;font-weight:bold;color:#c4c4c4;line-height:19px;height:19px;">T</div><svg style="left:123px;top:145px" width="17" height="5" viewBox="0 0 17 5"><path d="M2 2.5 H15" stroke="#c4c4c4" stroke-width="1"/><path d="M3.2 .3 L.2 2.5 L3.2 4.7Z M13.8 .3 L16.8 2.5 L13.8 4.7Z" fill="#c4c4c4"/></svg><div class="a" style="left:123px;top:159px;width:18px;height:11px;background:#c4c4c4;"></div><div class="t" style="left:124px;top:157.5px;font-size:11px;font-weight:bold;color:#535353;letter-spacing:-1px;line-height:14px;height:14px">VA</div><svg style="left:123px;top:171.5px" width="18" height="5" viewBox="0 0 18 5"><path d="M2 2.5 H16" stroke="#c4c4c4" stroke-width="1"/><path d="M3.2 .3 L.2 2.5 L3.2 4.7Z M14.8 .3 L17.8 2.5 L14.8 4.7Z" fill="#c4c4c4"/></svg></div>
<!-- pathfinder panel -->
<div class="a" style="left:1113px;top:91px;width:232px;height:149px;background:#535353;border:1px solid #383838;border-radius:4px 4px 0 0;overflow:hidden"><div class="a" style="left:0px;top:0px;width:230px;height:13px;background:#424242;"></div><div class="a" style="left:0px;top:13px;width:230px;height:1px;background:#383838;"></div><svg style="left:199.93px;top:4.95px" width="7.14" height="5.1" viewBox="0 0 8.4 6"><path d="M3.4 .6 L.8 3 L3.4 5.4 M7.6 .6 L5 3 L7.6 5.4" fill="none" stroke="#d0d0d0" stroke-width="1.5"/></svg><svg style="left:218.5px;top:4.5px" width="7" height="7" viewBox="0 0 7 7"><path d="M.8 .8 L6.2 6.2 M6.2 .8 L.8 6.2" stroke="#d8d8d8" stroke-width="1.8"/></svg><div class="a" style="left:0px;top:14px;width:230px;height:26px;background:#424242;"></div><div class="a" style="left:42px;top:14px;width:1px;height:26px;background:#383838;"></div><div class="t" style="left:9.5px;top:20.4px;color:#a4a4a4;letter-spacing:0.242px;">变换</div><div class="a" style="left:86px;top:14px;width:1px;height:26px;background:#383838;"></div><div class="t" style="left:52.5px;top:20.4px;color:#a4a4a4;letter-spacing:0.242px;">对齐</div><div class="a" style="left:87px;top:14px;width:77px;height:27px;background:#535353;"></div><div class="a" style="left:164px;top:14px;width:1px;height:26px;background:#383838;"></div><div class="t" style="left:95.5px;top:20.4px;color:#f0f0f0;letter-spacing:0.197px;">路径查找器</div><div class="a" style="left:0px;top:40px;width:230px;height:1px;background:#383838;"></div><div class="a" style="left:87px;top:40px;width:77px;height:1px;background:#535353;"></div><div class="a" style="left:214px;top:24px;width:10px;height:7px;background:repeating-linear-gradient(#c8c8c8 0 1px,transparent 1px 2px)"></div><div class="t serif" style="left:5px;top:48px;font-size:11.5px;font-weight:600;color:#c8c8c8;letter-spacing:0.630px;">形状模式 :</div><div class="t serif" style="left:5px;top:97.5px;font-size:11.5px;font-weight:600;color:#c8c8c8;letter-spacing:0.612px;">路径查找器 :</div><div class="a" style="left:151.5px;top:69.5px;width:73.5px;height:19px;background:#5a5a5a;border-radius:2px"></div><div class="t serif" style="left:176px;top:72px;font-size:11px;color:#747474;letter-spacing:0.500px;">扩展</div><svg style="left:10px;top:71px" width="16" height="16" viewBox="0 0 16 16"><rect x="1" y="1" width="10" height="10" fill="#cfcfcf"/><rect x="5" y="5" width="10" height="10" fill="#cfcfcf"/></svg><svg style="left:46px;top:71px" width="16" height="16" viewBox="0 0 16 16"><rect x="1" y="1" width="10" height="10" fill="#cfcfcf"/><rect x="5" y="5" width="10" height="10" fill="#535353"/><rect x="5.6" y="5.6" width="8.8" height="8.8" fill="none" stroke="#cfcfcf" stroke-width="1.2"/></svg><svg style="left:82px;top:71px" width="16" height="16" viewBox="0 0 16 16"><rect x="1.6" y="1.6" width="8.8" height="8.8" fill="none" stroke="#cfcfcf" stroke-width="1.2"/><rect x="5.6" y="5.6" width="8.8" height="8.8" fill="none" stroke="#cfcfcf" stroke-width="1.2"/><rect x="5" y="5" width="6" height="6" fill="#b8b8b8"/></svg><svg style="left:119px;top:71px" width="16" height="16" viewBox="0 0 16 16"><rect x="1" y="1" width="10" height="10" fill="#cfcfcf"/><rect x="5" y="5" width="10" height="10" fill="#cfcfcf"/><rect x="5.8" y="5.8" width="4.4" height="4.4" fill="#4a4a4a"/></svg><svg style="left:13px;top:121px" width="16" height="16" viewBox="0 0 16 16"><rect x="0.8" y="0.8" width="10.6" height="10.6" fill="#cfcfcf"/><rect x="4.4" y="4.4" width="10.8" height="10.8" fill="#cfcfcf"/><rect x="4.85" y="4.85" width="6.1" height="6.1" fill="none" stroke="#535353" stroke-width=".9"/></svg><svg style="left:50px;top:121px" width="16" height="16" viewBox="0 0 16 16"><rect x="1.6" y="1.6" width="8.8" height="8.8" fill="none" stroke="#cfcfcf" stroke-width="1.2"/><rect x="5" y="5" width="10.5" height="10.5" fill="#cfcfcf"/></svg><svg style="left:87px;top:121px" width="16" height="16" viewBox="0 0 16 16"><rect x="1" y="1" width="10" height="10" fill="#cfcfcf"/><rect x="5" y="5" width="10.5" height="10.5" fill="#cfcfcf"/></svg><svg style="left:124px;top:121px" width="16" height="16" viewBox="0 0 16 16"><rect x="1.6" y="1.6" width="8.8" height="8.8" fill="none" stroke="#8c8c8c" stroke-width="1.2"/><rect x="5.3" y="5.3" width="5.2" height="5.2" fill="#cccccc"/><rect x="5.6" y="5.6" width="8.8" height="8.8" fill="none" stroke="#c8c8c8" stroke-width="1.2"/></svg><svg style="left:161.5px;top:121px" width="16" height="16" viewBox="0 0 16 16"><rect x="1.6" y="1.6" width="8.8" height="8.8" fill="none" stroke="#c8c8c8" stroke-width="1.2"/><rect x="5.6" y="5.6" width="8.8" height="8.8" fill="none" stroke="#c8c8c8" stroke-width="1.2"/><rect x="5.6" y="5.6" width="4.8" height="4.8" fill="none" stroke="#c8c8c8" stroke-width="1.2"/></svg><svg style="left:200px;top:121px" width="16" height="16" viewBox="0 0 16 16"><rect x="5.5" y="5.5" width="10" height="10" fill="#cfcfcf"/><rect x="1" y="1" width="10" height="10" fill="#535353"/><rect x="1.6" y="1.6" width="8.8" height="8.8" fill="none" stroke="#cfcfcf" stroke-width="1.2"/></svg></div>
<!-- links panel -->
<div class="a" style="left:1345px;top:80px;width:287px;height:884px;background:#535353;border:1px solid #383838;border-radius:4px 4px 0 0;box-shadow:-1px 1px 3px rgba(0,0,0,.35);overflow:hidden"><div class="a" style="left:0px;top:0px;width:286px;height:13px;background:#424242;"></div><div class="a" style="left:0px;top:12px;width:286px;height:1px;background:#383838;"></div><svg style="left:255.13px;top:4.15px" width="7.14" height="5.1" viewBox="0 0 8.4 6"><path d="M3.4 .6 L.8 3 L3.4 5.4 M7.6 .6 L5 3 L7.6 5.4" fill="none" stroke="#d0d0d0" stroke-width="1.5"/></svg><svg style="left:273.5px;top:3.5px" width="7" height="7" viewBox="0 0 7 7"><path d="M.8 .8 L6.2 6.2 M6.2 .8 L.8 6.2" stroke="#d8d8d8" stroke-width="1.8"/></svg><div class="a" style="left:0px;top:13px;width:286px;height:26px;background:#424242;"></div><div class="a" style="left:42px;top:13px;width:1px;height:26px;background:#383838;"></div><div class="t" style="left:9px;top:19.4px;color:#a4a4a4;letter-spacing:0.492px;">动作</div><div class="a" style="left:43px;top:13px;width:42px;height:27px;background:#535353;"></div><div class="a" style="left:85px;top:13px;width:1px;height:26px;background:#383838;"></div><div class="t" style="left:52px;top:19.4px;color:#f0f0f0;letter-spacing:0.492px;">链接</div><div class="a" style="left:0px;top:39px;width:286px;height:1px;background:#383838;"></div><div class="a" style="left:43px;top:39px;width:42px;height:1px;background:#535353;"></div><div class="a" style="left:269px;top:22.5px;width:10px;height:7px;background:repeating-linear-gradient(#c8c8c8 0 1px,transparent 1px 2px)"></div><div class="a" style="left:5px;top:46px;width:275px;height:573px;border:1px solid #5e5e5e;border-radius:2px"></div><svg style="left:12px;top:627px" width="12" height="6" viewBox="0 0 12 6"><path d="M0 0 H12 L6 5.6Z" fill="#e4e4e4"/></svg><svg style="left:134px;top:620.8px" width="120" height="15" viewBox="0 0 120 15" fill="none" stroke="#787878" stroke-width="1.3"><path d="M5.5 9.5 C3 6.5 7 4 8.5 6 C9.5 2.5 14.5 3 14.8 6.5 C18 6.5 18 11.5 15 11.5 H10" fill="#787878"/><rect x="1" y="8.5" width="5.5" height="3.6" rx="1.8" stroke="#787878" fill="#535353"/><rect x="4.8" y="10" width="5.5" height="3.6" rx="1.8" fill="none"/><rect x="28.5" y="5" width="8" height="5" rx="2.5"/><rect x="33.5" y="5" width="8" height="5" rx="2.5"/><path d="M52 8 H58"/><path d="M57 5 L60.5 8 L57 11Z" fill="#787878" stroke="none"/><path d="M60 5 V2.5 H65.5 L68.5 5.5 V12.5 H60 V11 M65.3 2.8 V5.8 H68.3"/><path d="M81.5 6 A5 5 0 0 1 90.5 5 M91.5 9 A5 5 0 0 1 82.5 10"/><path d="M91.8 2 V6 H87.8Z M81.2 13 V9 H85.2Z" fill="#787878" stroke="none"/><path d="M105 12.5 L106 9 L114 1.5 L116.5 4 L108.5 11.5Z" fill="#787878" stroke="none"/></svg><div class="a" style="left:5px;top:638px;width:275px;height:216px;border:1px solid #5e5e5e"></div><div class="t serif" style="left:34.5px;top:642.7px;font-size:11.5px;font-weight:500;color:#d0d0d0;letter-spacing:0.855px;">名称 :</div><div class="a" style="left:79px;top:650.2px;width:6px;height:1px;background:#d0d0d0;"></div><div class="t serif" style="left:34.5px;top:662px;font-size:11.5px;font-weight:500;color:#d0d0d0;letter-spacing:0.855px;">格式 :</div><div class="a" style="left:79px;top:669.5px;width:6px;height:1px;background:#d0d0d0;"></div><div class="t serif" style="left:10.5px;top:681.2px;font-size:11.5px;font-weight:500;color:#d0d0d0;letter-spacing:0.737px;">色彩空间 :</div><div class="a" style="left:79px;top:688.7px;width:6px;height:1px;background:#d0d0d0;"></div><div class="t serif" style="left:34.5px;top:702.3px;font-size:11.5px;font-weight:500;color:#d0d0d0;letter-spacing:0.855px;">位置 :</div><div class="a" style="left:81.5px;top:707.8px;width:5.5px;height:1px;background:#8a8a8a;"></div><div class="a" style="left:75px;top:714.8px;width:12px;height:1px;background:repeating-linear-gradient(90deg,#888 0 1px,transparent 1px 2px)"></div><div class="t serif" style="left:42.5px;top:721.2px;font-size:11.5px;color:#d0d0d0;letter-spacing:1.168px;">PPI:</div><div class="a" style="left:79px;top:728.7px;width:6px;height:1px;background:#d0d0d0;"></div><div class="t serif" style="left:34.5px;top:740.1px;font-size:11.5px;font-weight:500;color:#d0d0d0;letter-spacing:0.855px;">尺寸 :</div><div class="a" style="left:79px;top:747.6px;width:6px;height:1px;background:#d0d0d0;"></div><div class="t serif" style="left:34.5px;top:759.3px;font-size:11.5px;font-weight:500;color:#d0d0d0;letter-spacing:0.855px;">缩放 :</div><div class="a" style="left:79px;top:766.8px;width:6px;height:1px;background:#d0d0d0;"></div><div class="t serif" style="left:34.5px;top:778.2px;font-size:11.5px;font-weight:500;color:#d0d0d0;letter-spacing:0.855px;">大小 :</div><div class="a" style="left:79px;top:785.7px;width:6px;height:1px;background:#d0d0d0;"></div><div class="t serif" style="left:10.5px;top:797.5px;font-size:11.5px;font-weight:500;color:#d0d0d0;letter-spacing:0.737px;">创建日期 :</div><div class="a" style="left:79px;top:805px;width:6px;height:1px;background:#d0d0d0;"></div><div class="t serif" style="left:10.5px;top:816.4px;font-size:11.5px;font-weight:500;color:#d0d0d0;letter-spacing:0.737px;">修改日期 :</div><div class="a" style="left:79px;top:823.9px;width:6px;height:1px;background:#d0d0d0;"></div><div class="t serif" style="left:34.5px;top:835.3px;font-size:11.5px;font-weight:500;color:#d0d0d0;letter-spacing:0.855px;">透明 :</div><div class="a" style="left:79px;top:842.8px;width:6px;height:1px;background:#d0d0d0;"></div><svg style="left:125px;top:859px" width="34" height="11" viewBox="0 0 34 11"><path d="M6 0 V11 L.2 5.5Z M28 0 V11 L33.8 5.5Z" fill="#747474"/></svg><div class="a" style="left:0px;top:874px;width:286px;height:2px;background:#3a3a3a;"></div><div class="a" style="left:0px;top:876px;width:286px;height:7px;background:#525252;"></div><div class="a" style="left:133px;top:876px;width:20px;height:4px;background:repeating-linear-gradient(90deg,#303030 0 1px,transparent 1px 2px)"></div></div>
<!-- color panel -->
<div class="a" style="left:1637px;top:72px;width:236px;height:104px;background:#535353;border-left:1px solid #383838;border-top:4px solid #3a3a3a;border-bottom:1px solid #383838;overflow:hidden"><div class="a" style="left:0px;top:0px;width:236px;height:26px;background:#424242;"></div><div class="a" style="left:0px;top:0px;width:47px;height:27px;background:#535353;"></div><div class="a" style="left:47px;top:0px;width:1px;height:26px;background:#383838;"></div><div class="t" style="left:14.5px;top:5.7px;color:#f0f0f0;letter-spacing:0.742px;">颜色</div><div class="a" style="left:112px;top:0px;width:1px;height:26px;background:#383838;"></div><div class="t" style="left:55.5px;top:5.7px;color:#a4a4a4;letter-spacing:0.371px;">颜色参考</div><div class="a" style="left:0px;top:26px;width:236px;height:1px;background:#383838;"></div><div class="a" style="left:0px;top:26px;width:47px;height:1px;background:#535353;"></div><svg style="left:4.250000000000046px;top:9.325px" width="6.8999999999999995" height="10.35" viewBox="0 0 6 9"><path d="M.7 3.3 L3 1 L5.3 3.3 M.7 5.7 L3 8 L5.3 5.7" fill="none" stroke="#c8c8c8" stroke-width="1.1"/></svg><svg style="left:197.8px;top:11px" width="8.4" height="6" viewBox="0 0 8.4 6"><path d="M.8 .6 L3.4 3 L.8 5.4 M5 .6 L7.6 3 L5 5.4" fill="none" stroke="#e0e0e0" stroke-width="1.5"/></svg><div class="a" style="left:214px;top:8px;width:1px;height:11px;background:#8a8a8a;"></div><div class="a" style="left:222px;top:10px;width:10px;height:7px;background:repeating-linear-gradient(#c8c8c8 0 1px,transparent 1px 2px)"></div><svg style="left:5px;top:36px" width="40" height="14" viewBox="0 0 40 14"><rect x=".5" y=".5" width="13" height="13" fill="#fff" stroke="#222"/><path d="M1 13 L13 1" stroke="#d81414" stroke-width="2"/><rect x="13.5" y=".5" width="13" height="13" fill="#0c0808" stroke="#222"/><rect x="26.5" y=".5" width="13" height="13" fill="#fff" stroke="#222"/></svg><div class="t mono" style="left:167px;top:36.5px;font-size:11px;color:#c8c8c8;letter-spacing:0.891px;">#</div><div class="box" style="left:176.5px;top:33.5px;width:45px;height:20px;background:#484848;border-color:#626262"></div><div class="t serif" style="left:181px;top:34.5px;font-size:11.5px;color:#f0f0f0;letter-spacing:0.201px;">FF0000</div><div class="a" style="left:6px;top:60px;width:215px;height:24.5px;border:1px solid #2a2a2a;background:linear-gradient(to bottom,rgba(255,255,255,1) 0%,rgba(255,255,255,0) 50%,rgba(0,0,0,0) 50%,rgba(0,0,0,1) 100%),linear-gradient(to right,#f00 0%,#ff0 16.67%,#0f0 33.33%,#0ff 50%,#00f 66.67%,#f0f 83.33%,#f00 100%)"></div><div class="a" style="left:0px;top:91px;width:236px;height:2px;background:#3a3a3a;"></div><div class="a" style="left:0px;top:93px;width:236px;height:7px;background:#525252;"></div><div class="a" style="left:109px;top:93.5px;width:20px;height:4px;background:repeating-linear-gradient(90deg,#303030 0 1px,transparent 1px 2px)"></div></div>
</body>
</html>
